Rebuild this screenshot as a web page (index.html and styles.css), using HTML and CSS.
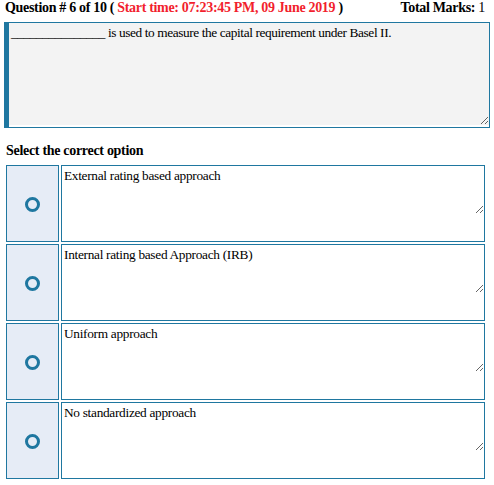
FILE: index.html
```html
<!DOCTYPE html>
<html>
<head>
<meta charset="utf-8">
<link rel="stylesheet" href="styles.css">
</head>
<body>
<div class="page">
  <div class="head">
    <div class="qnum">Question # 6 of 10 ( <span class="start">Start time: 07:23:45 PM, 09 June 2019</span> )</div>
    <div class="marks">Total Marks: <span class="num">1</span></div>
  </div>
  <div class="qbox"><textarea class="qtext" readonly>_______________ is used to measure the capital requirement under Basel II.</textarea></div>
  <div class="select">Select the correct option</div>
  <table class="opts">
    <tr>
      <td class="radio"><span class="ring"></span></td>
      <td class="text"><textarea class="otext" readonly>External rating based approach</textarea></td>
    </tr>
    <tr>
      <td class="radio"><span class="ring"></span></td>
      <td class="text"><textarea class="otext" readonly>Internal rating based Approach (IRB)</textarea></td>
    </tr>
    <tr>
      <td class="radio"><span class="ring"></span></td>
      <td class="text"><textarea class="otext" readonly>Uniform approach</textarea></td>
    </tr>
    <tr>
      <td class="radio"><span class="ring"></span></td>
      <td class="text"><textarea class="otext" readonly>No standardized approach</textarea></td>
    </tr>
  </table>
</div>
</body>
</html>
```

FILE: styles.css
```css
html, body {
  margin: 0;
  padding: 0;
  background: #ffffff;
}
body {
  font-family: "Liberation Serif", "Times New Roman", serif;
  color: #000;
}
.page {
  padding: 0 4px;
}
.head {
  display: flex;
  justify-content: space-between;
  align-items: baseline;
  font-weight: bold;
  font-size: 14px;
  letter-spacing: -0.32px;
  line-height: 16px;
  padding: 0 5px 0 1px;
  height: 22px;
  white-space: nowrap;
}
.start {
  color: #f21f2e;
}
.num {
  font-weight: normal;
}
.qbox {
  border: 1px solid #1f77a0;
  border-left: 5px solid #1f77a0;
  height: 104px;
  overflow: hidden;
}
.qtext {
  display: inline-block;
  vertical-align: baseline;
  width: 100%;
  height: 102px;
  box-sizing: border-box;
  margin: 0;
  border: none;
  padding: 2px;
  background: #f3f3f3;
  font-family: "Liberation Serif", "Times New Roman", serif;
  font-size: 13.33px;
  letter-spacing: -0.4px;
  color: #000;
  outline: none;
}
.select {
  font-weight: bold;
  font-size: 14px;
  letter-spacing: -0.3px;
  line-height: 16px;
  padding: 0 0 0 2px;
  margin-top: 15px;
  height: 16px;
}
.opts {
  border-collapse: separate;
  border-spacing: 2px;
  width: 483px;
  margin-top: 4px;
}
.opts td {
  border: 1px solid #1f77a0;
  padding: 0;
  height: 75px;
  vertical-align: top;
}
.opts td.radio {
  width: 51px;
  background: #e6ecf6;
  vertical-align: middle;
  text-align: center;
}
.ring {
  display: inline-block;
  width: 9px;
  height: 9px;
  border: 3.5px solid #1f77a0;
  border-radius: 50%;
  vertical-align: middle;
}
.otext {
  display: block;
  width: 100%;
  height: 48px;
  box-sizing: border-box;
  margin: 0;
  border: none;
  padding: 2px;
  background: #fff;
  font-family: "Liberation Serif", "Times New Roman", serif;
  font-size: 13.33px;
  letter-spacing: -0.3px;
  color: #000;
  outline: none;
}
```
